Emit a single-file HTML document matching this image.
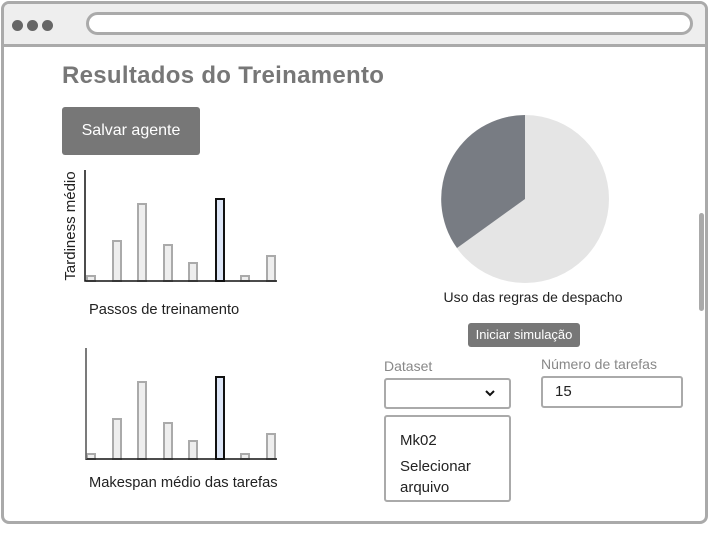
<!DOCTYPE html>
<html><head><meta charset="utf-8"><style>
*{margin:0;padding:0;box-sizing:border-box}
body{width:709px;height:538px;background:#fff;position:relative;overflow:hidden;font-family:"Liberation Sans",sans-serif;color:#222}
.a{position:absolute}
.frame{left:1px;top:1px;width:707px;height:523px;border:3px solid #aaa;border-radius:8px;overflow:hidden}
.hdr{left:0;top:0;width:701px;height:43px;background:#eee;border-bottom:3px solid #aaa}
.dot{width:11px;height:11px;border-radius:50%;background:#666;top:16px}
.url{left:82px;top:8px;width:607px;height:23px;border:3px solid #aaa;border-radius:12px;background:#fff}
</style></head><body>
<div class="a frame">
 <div class="a hdr">
  <div class="a dot" style="left:8px"></div>
  <div class="a dot" style="left:23px"></div>
  <div class="a dot" style="left:38px"></div>
  <div class="a url"></div>
 </div>
</div>
<div class="a" style="left:62px;top:62px;font-size:24px;letter-spacing:0.3px;font-weight:bold;color:#777">Resultados do Treinamento</div>
<div class="a" style="left:62px;top:107px;width:138px;height:48px;background:#777;border-radius:3px;color:#fff;font-size:16px;line-height:48px;text-align:center">Salvar agente</div>
<svg class="a" style="left:0;top:0" width="709" height="538">
 <g fill="#eee" stroke="#aaa" stroke-width="2">
  <rect x="87" y="276" width="8" height="5"/><rect x="113" y="241" width="8" height="40"/><rect x="138" y="204" width="8" height="77"/><rect x="164" y="245" width="8" height="36"/><rect x="189" y="263" width="8" height="18"/><rect x="241" y="276" width="8" height="5"/><rect x="267" y="256" width="8" height="25"/>
  <rect x="87" y="454" width="8" height="5"/><rect x="113" y="419" width="8" height="40"/><rect x="138" y="382" width="8" height="77"/><rect x="164" y="423" width="8" height="36"/><rect x="189" y="441" width="8" height="18"/><rect x="241" y="454" width="8" height="5"/><rect x="267" y="434" width="8" height="25"/>
 </g>
 <rect x="216" y="199" width="8" height="82" fill="#dde6f7" stroke="#111" stroke-width="2"/>
 <rect x="216" y="377" width="8" height="82" fill="#dde6f7" stroke="#111" stroke-width="2"/>
 <path d="M85 170V281H277" fill="none" stroke="#111" stroke-width="1.5"/>
 <path d="M86 348V459H277" fill="none" stroke="#111" stroke-width="1.5"/>
 <path d="M86 348V459" stroke="#777" stroke-width="1.5"/>
 <circle cx="525" cy="199" r="84" fill="#e5e5e5"/>
 <path d="M525 199L525 115A84 84 0 0 0 457 248Z" fill="#787c83"/>
 <text x="75" y="226" transform="rotate(-90 75 226)" text-anchor="middle" font-size="15" font-family="Liberation Sans" fill="#222">Tardiness médio</text>
 <rect x="699" y="213" width="5" height="98" rx="2.5" fill="#aaa"/>
</svg>
<div class="a" style="left:89px;top:302px;font-size:14.7px">Passos de treinamento</div>
<div class="a" style="left:89px;top:475px;font-size:14.7px">Makespan médio das tarefas</div>
<div class="a" style="left:433px;top:289px;width:200px;text-align:center;font-size:14px">Uso das regras de despacho</div>
<div class="a" style="left:468px;top:323px;width:112px;height:24px;background:#777;border-radius:3px;color:#fff;font-size:13px;line-height:24px;text-align:center">Iniciar simulação</div>
<div class="a" style="left:384px;top:358px;font-size:14px;color:#888">Dataset</div>
<div class="a" style="left:384px;top:378px;width:127px;height:31px;border:2px solid #aaa;border-radius:3px">
 <svg class="a" style="left:98px;top:9px" width="12" height="9"><path d="M2 2L6 6L10 2" fill="none" stroke="#111" stroke-width="2"/></svg>
</div>
<div class="a" style="left:384px;top:415px;width:127px;height:87px;border:2px solid #aaa;border-radius:3px;padding:13px 0 0 14px;font-size:15px;line-height:21px;color:#222">Mk02<div style="margin-top:5px">Selecionar<br>arquivo</div></div>
<div class="a" style="left:541px;top:356px;font-size:14px;color:#888">Número de tarefas</div>
<div class="a" style="left:541px;top:376px;width:142px;height:32px;border:2px solid #aaa;border-radius:3px;padding-left:12px;font-size:15px;line-height:28px">15</div>
</body></html>
